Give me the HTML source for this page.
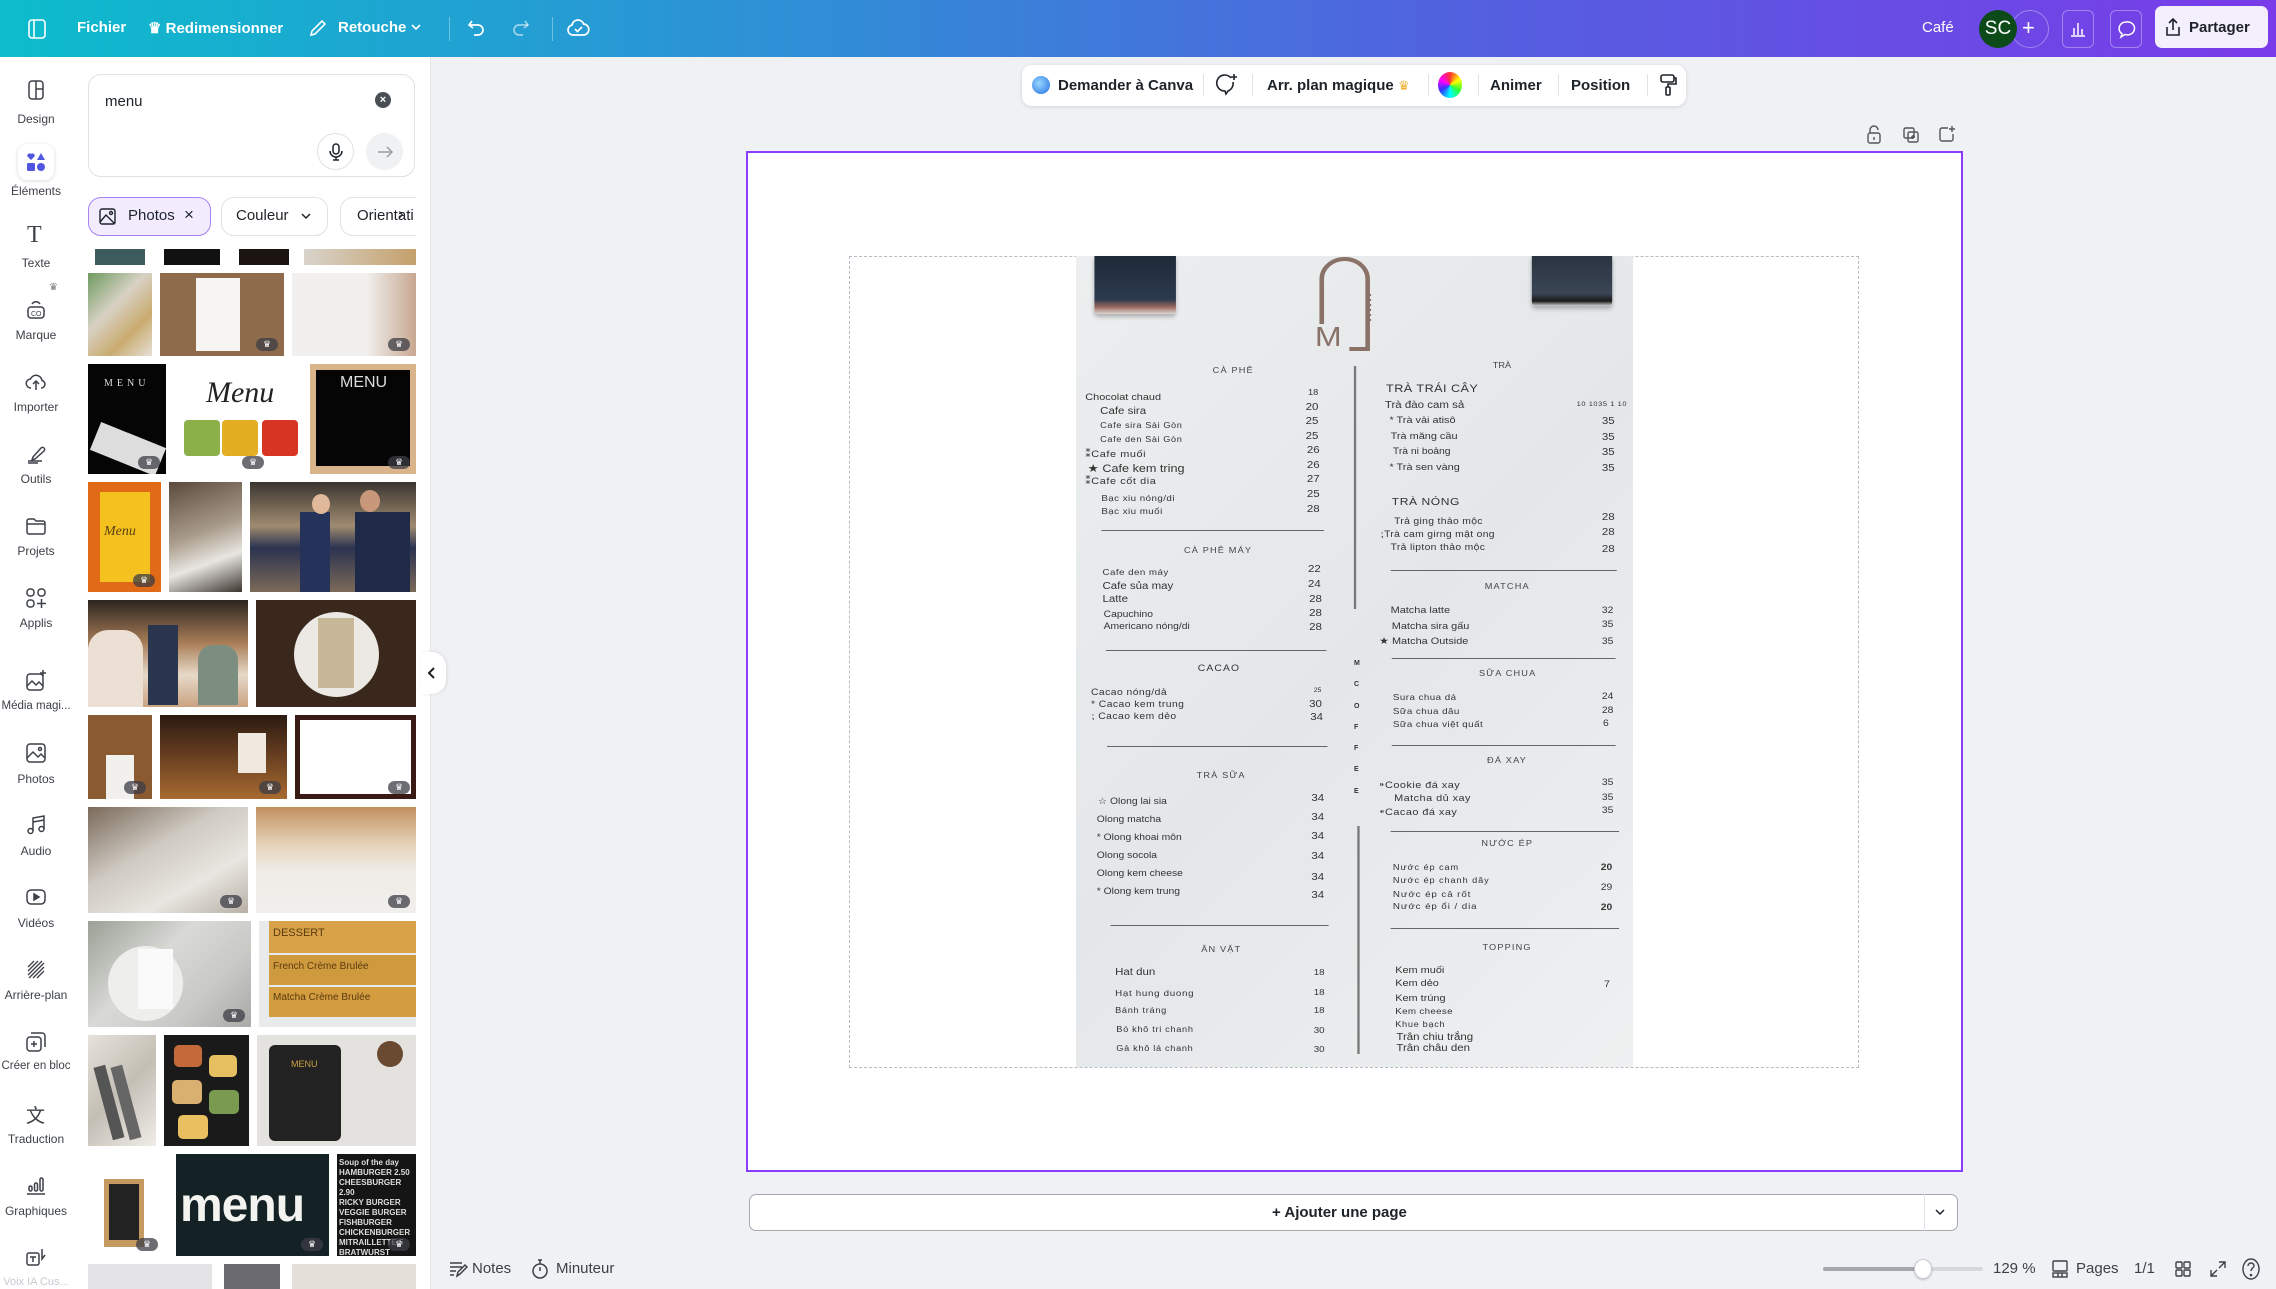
<!DOCTYPE html>
<html><head><meta charset="utf-8">
<style>
*{box-sizing:border-box;margin:0;padding:0}
body{width:2276px;height:1289px;overflow:hidden;background:#eff1f5;font-family:"Liberation Sans","Noto Sans CJK SC",sans-serif;position:relative;color:#0d1216}
.a{position:absolute}
#top{left:0;top:0;width:2276px;height:57px;background:linear-gradient(90deg,#0cbccc 0%,#2f8fd6 35%,#5360df 65%,#7a3be9 100%)}
.tt{color:#fff;font-size:15px;font-weight:bold;top:19px}
.rail{left:0;top:57px;width:72px;height:1232px;background:#fff}
.panel{left:72px;top:57px;width:359px;height:1232px;background:#fff;border-right:1px solid #e4e6ea}
.lbl{width:72px;left:0;text-align:center;font-size:12px;color:#3c4148}
.ic{left:24px;width:24px;height:24px}
.th{position:absolute;overflow:hidden}
.cr{position:absolute;right:6px;bottom:5px;width:22px;height:13px;border-radius:7px;background:rgba(60,60,70,.75);color:#fff;font-size:9px;text-align:center;line-height:13px}
.m{position:absolute;font-family:"Liberation Sans",sans-serif;color:#333;white-space:nowrap;font-size:10px;line-height:1}
.h{font-size:8px;letter-spacing:1px;color:#444}
.p{position:absolute;color:#333;font-size:10px;line-height:1}
.ln{position:absolute;height:1px;background:#666}
.tb{font-size:15px;font-weight:bold;color:#1d2329;top:77px}
.sep{position:absolute;top:74px;width:1px;height:22px;background:#e0e2e6}
#mw{position:absolute;left:0;top:0;width:2276px;height:1289px;transform-origin:1060px 0;transform:scaleX(1.148)}
</style></head><body>

<!-- TOP BAR -->
<div id="top" class="a"></div>
<svg class="a" style="left:26px;top:18px" width="22" height="22" viewBox="0 0 22 22" fill="none" stroke="#fff" stroke-width="1.6"><rect x="3" y="2" width="16" height="18" rx="3"/><line x1="8" y1="2" x2="8" y2="20"/></svg>
<div class="a tt" style="left:77px">Fichier</div>
<div class="a tt" style="left:148px">♛ Redimensionner</div>
<svg class="a" style="left:308px;top:18px" width="20" height="20" viewBox="0 0 20 20" fill="none" stroke="#fff" stroke-width="1.6"><path d="M3 17l1-4L14 3l3 3L7 16z"/></svg>
<div class="a tt" style="left:338px">Retouche</div>
<svg class="a" style="left:410px;top:22px" width="12" height="10" viewBox="0 0 12 10" fill="none" stroke="#fff" stroke-width="1.6"><path d="M2 3l4 4 4-4"/></svg>
<div class="a" style="left:449px;top:17px;width:1px;height:24px;background:rgba(255,255,255,.35)"></div>
<svg class="a" style="left:466px;top:17px" width="22" height="22" viewBox="0 0 22 22" fill="none" stroke="#fff" stroke-width="1.7"><path d="M6 4L3 8l4 3"/><path d="M3 8h9a5 5 0 010 10H8"/></svg>
<svg class="a" style="left:509px;top:17px" width="22" height="22" viewBox="0 0 22 22" fill="none" stroke="rgba(255,255,255,.55)" stroke-width="1.7"><path d="M16 4l3 4-4 3"/><path d="M19 8h-9a5 5 0 000 10h4"/></svg>
<div class="a" style="left:552px;top:17px;width:1px;height:24px;background:rgba(255,255,255,.35)"></div>
<svg class="a" style="left:566px;top:16px" width="24" height="24" viewBox="0 0 24 24" fill="none" stroke="#fff" stroke-width="1.7"><path d="M7 19a5 5 0 01-1-9.9A6 6 0 0117.6 8 5 5 0 0117 19z"/><path d="M9 13l2.5 2.5L16 11"/></svg>
<div class="a tt" style="left:1922px;font-weight:normal">Café</div>
<div class="a" style="left:2011px;top:10px;width:38px;height:38px;border-radius:50%;border:1px solid rgba(255,255,255,.35)"></div>
<div class="a" style="left:2022px;top:15px;color:#fff;font-size:22px">+</div>
<div class="a" style="left:1979px;top:10px;width:38px;height:38px;border-radius:50%;background:#0c4a1a;color:#fff;font-size:19px;text-align:center;line-height:38px">SC</div>
<div class="a" style="left:2062px;top:10px;width:32px;height:38px;border-radius:6px;border:1px solid rgba(255,255,255,.35)"></div>
<svg class="a" style="left:2068px;top:19px" width="20" height="20" viewBox="0 0 20 20" fill="none" stroke="#fff" stroke-width="1.5"><path d="M3 17h14M6 16V9M10 16V4M14 16v-6"/></svg>
<div class="a" style="left:2110px;top:10px;width:32px;height:38px;border-radius:6px;border:1px solid rgba(255,255,255,.35)"></div>
<svg class="a" style="left:2116px;top:19px" width="20" height="20" viewBox="0 0 20 20" fill="none" stroke="#fff" stroke-width="1.5"><path d="M10 3a7 6.5 0 00-4 11.8L5 18l4-2.6A7 6.5 0 1010 3z"/></svg>
<div class="a" style="left:2155px;top:6px;width:113px;height:42px;border-radius:7px;background:#f4effd"></div>
<svg class="a" style="left:2163px;top:17px" width="20" height="20" viewBox="0 0 20 20" fill="none" stroke="#1d2329" stroke-width="1.6"><path d="M10 13V2M6 6l4-4 4 4M4 10v8h12v-8"/></svg>
<div class="a" style="left:2189px;top:19px;font-size:15px;font-weight:bold;color:#1d2329">Partager</div>

<!-- LEFT RAIL -->
<div class="a rail"></div>
<div class="a panel"></div>
<svg class="a ic" style="top:78px" viewBox="0 0 24 24" fill="none" stroke="#3c4148" stroke-width="1.5"><rect x="5" y="3" width="14" height="18" rx="3"/><path d="M12 3v18M12 11h7"/></svg>
<div class="a lbl" style="top:112px">Design</div>
<div class="a" style="left:18px;top:144px;width:36px;height:36px;border-radius:9px;background:#fff;box-shadow:0 1px 4px rgba(0,0,0,.15)"></div>
<svg class="a" style="left:26px;top:152px" width="20" height="20" viewBox="0 0 20 20" fill="#4f57e0"><path d="M5 8L1.5 4.5a2.2 2.2 0 013.5-2.5 2.2 2.2 0 013.5 2.5z"/><path d="M15 1l4 7h-8z"/><rect x="1" y="11" width="8" height="8" rx="1.5"/><circle cx="15" cy="15" r="4"/></svg>
<div class="a lbl" style="top:184px">Éléments</div>
<div class="a" style="left:27px;top:222px;font-size:24px;color:#3c4148;font-family:'Liberation Serif',serif">T</div>
<div class="a lbl" style="top:256px">Texte</div>
<div class="a" style="left:49px;top:282px;font-size:10px;color:#777">♛</div>
<svg class="a ic" style="top:298px" viewBox="0 0 24 24" fill="none" stroke="#3c4148" stroke-width="1.5"><rect x="4" y="9" width="16" height="11" rx="3"/><path d="M8 6c2-3 6-3 8 0"/><text x="7" y="18" font-size="7" fill="#3c4148" stroke="none" font-family="Liberation Sans">CO</text></svg>
<div class="a lbl" style="top:328px">Marque</div>
<svg class="a ic" style="top:370px" viewBox="0 0 24 24" fill="none" stroke="#3c4148" stroke-width="1.5"><path d="M7 18a4.5 4.5 0 01-.5-9 6 6 0 0111.5 1.5A3.8 3.8 0 0117 18"/><path d="M12 20v-8M9 14l3-3 3 3"/></svg>
<div class="a lbl" style="top:400px">Importer</div>
<svg class="a ic" style="top:442px" viewBox="0 0 24 24" fill="none" stroke="#3c4148" stroke-width="1.5"><path d="M9 15l8-9a2 2 0 013 3l-9 8-3 1z"/><path d="M4 19h14M4 21h10"/></svg>
<div class="a lbl" style="top:472px">Outils</div>
<svg class="a ic" style="top:514px" viewBox="0 0 24 24" fill="none" stroke="#3c4148" stroke-width="1.5"><path d="M3 7a2 2 0 012-2h5l2 2h7a2 2 0 012 2v9a2 2 0 01-2 2H5a2 2 0 01-2-2z"/><path d="M3 10h18"/></svg>
<div class="a lbl" style="top:544px">Projets</div>
<svg class="a ic" style="top:586px" viewBox="0 0 24 24" fill="none" stroke="#3c4148" stroke-width="1.5"><rect x="3" y="3" width="7" height="7" rx="3"/><rect x="14" y="3" width="7" height="7" rx="3"/><rect x="3" y="14" width="7" height="7" rx="3"/><path d="M17.5 13v9M13 17.5h9"/></svg>
<div class="a lbl" style="top:616px">Applis</div>
<svg class="a ic" style="top:669px" viewBox="0 0 24 24" fill="none" stroke="#3c4148" stroke-width="1.5"><rect x="3" y="5" width="16" height="16" rx="3"/><path d="M3 17l5-5 4 4 3-3 4 4"/><path d="M19 1v6M16 4h6"/></svg>
<div class="a lbl" style="top:700px;font-size:11.5px">Média magi...</div>
<svg class="a ic" style="top:741px" viewBox="0 0 24 24" fill="none" stroke="#3c4148" stroke-width="1.5"><rect x="3" y="3" width="18" height="18" rx="3"/><path d="M3 17l6-6 5 5 3-3 4 4"/><circle cx="16" cy="8" r="1.5"/></svg>
<div class="a lbl" style="top:772px">Photos</div>
<svg class="a ic" style="top:813px" viewBox="0 0 24 24" fill="none" stroke="#3c4148" stroke-width="1.5"><path d="M9 18V5l11-2v13"/><circle cx="6.5" cy="18" r="2.5"/><circle cx="17.5" cy="16" r="2.5"/><path d="M9 9l11-2"/></svg>
<div class="a lbl" style="top:844px">Audio</div>
<svg class="a ic" style="top:885px" viewBox="0 0 24 24" fill="none" stroke="#3c4148" stroke-width="1.5"><rect x="3" y="5" width="18" height="14" rx="4"/><path d="M10 9v6l5-3z" fill="#3c4148"/></svg>
<div class="a lbl" style="top:916px">Vidéos</div>
<svg class="a ic" style="top:957px" viewBox="0 0 24 24" fill="none" stroke="#3c4148" stroke-width="1.3"><path d="M4 10l6-6M4 14l10-10M4 18l14-14M5 21l15-15M9 21l11-11M13 21l7-7"/></svg>
<div class="a lbl" style="top:988px">Arrière-plan</div>
<svg class="a ic" style="top:1030px" viewBox="0 0 24 24" fill="none" stroke="#3c4148" stroke-width="1.5"><rect x="3" y="7" width="14" height="14" rx="3"/><path d="M7 3h11a3 3 0 013 3v11"/><path d="M10 11v6M7 14h6"/></svg>
<div class="a lbl" style="top:1060px;font-size:11.5px">Créer en bloc</div>
<div class="a" style="left:26px;top:1101px;font-size:19px;color:#3c4148;font-family:'Noto Sans CJK SC',sans-serif">文</div>
<div class="a lbl" style="top:1132px">Traduction</div>
<svg class="a ic" style="top:1173px" viewBox="0 0 24 24" fill="none" stroke="#3c4148" stroke-width="1.5"><path d="M3 21h18"/><rect x="5" y="13" width="3" height="5" rx="1.5"/><rect x="10.5" y="10" width="3" height="8" rx="1.5"/><rect x="16" y="5" width="3" height="13" rx="1.5"/></svg>
<div class="a lbl" style="top:1204px">Graphiques</div>
<svg class="a ic" style="top:1244px" viewBox="0 0 24 24" fill="none" stroke="#3c4148" stroke-width="1.5"><rect x="3" y="9" width="12" height="12" rx="2"/><path d="M6 13h6M9 13v5M18 5v10l3-4"/></svg>
<div class="a lbl" style="top:1276px;color:#c8cad0;font-size:11px">Voix IA Cus...</div>

<!-- SEARCH -->
<div class="a" style="left:88px;top:74px;width:327px;height:103px;border:1px solid #dfe1e5;border-radius:13px;background:#fff"></div>
<div class="a" style="left:105px;top:93px;font-size:15px;color:#1d2329">menu</div>
<div class="a" style="left:375px;top:92px;width:16px;height:16px;border-radius:50%;background:#4a4f55;color:#fff;font-size:11px;line-height:16px;text-align:center;font-weight:bold">×</div>
<div class="a" style="left:317px;top:133px;width:37px;height:37px;border-radius:50%;border:1px solid #dfe1e5"></div>
<svg class="a" style="left:326px;top:142px" width="20" height="20" viewBox="0 0 20 20" fill="none" stroke="#1d2329" stroke-width="1.5"><rect x="7" y="2" width="6" height="10" rx="3"/><path d="M4 9a6 6 0 0012 0M10 15v3M7 18h6"/></svg>
<div class="a" style="left:366px;top:133px;width:37px;height:37px;border-radius:50%;background:#f0f1f3"></div>
<svg class="a" style="left:375px;top:142px" width="20" height="20" viewBox="0 0 20 20" fill="none" stroke="#9a9ea5" stroke-width="1.5"><path d="M3 10h14M12 5l5 5-5 5"/></svg>
<!-- chips -->
<div class="a" style="left:88px;top:197px;width:123px;height:39px;border:1.5px solid #a782f2;border-radius:13px;background:#f2ecfe"></div>
<svg class="a" style="left:98px;top:207px" width="19" height="19" viewBox="0 0 19 19" fill="none" stroke="#1d2329" stroke-width="1.4"><rect x="2" y="2" width="15" height="15" rx="2"/><path d="M2 15l6-7 9 9"/><circle cx="13" cy="6" r="1.5"/></svg>
<div class="a" style="left:128px;top:207px;font-size:15px;color:#1d2329">Photos</div>
<div class="a" style="left:184px;top:205px;font-size:17px;color:#1d2329">×</div>
<div class="a" style="left:221px;top:197px;width:107px;height:39px;border:1px solid #dfe1e5;border-radius:13px"></div>
<div class="a" style="left:236px;top:207px;font-size:15px;color:#1d2329">Couleur</div>
<svg class="a" style="left:300px;top:211px" width="12" height="10" viewBox="0 0 12 10" fill="none" stroke="#1d2329" stroke-width="1.5"><path d="M2 3l4 4 4-4"/></svg>
<div class="a" style="left:340px;top:197px;width:76px;height:39px;border:1px solid #dfe1e5;border-radius:13px 0 0 13px;border-right:none;overflow:hidden"><div style="position:absolute;left:16px;top:9px;font-size:15px;color:#1d2329">Orientati</div></div>
<div class="a" style="left:398px;top:204px;font-size:17px;color:#1d2329">›</div>

<!-- THUMBNAILS -->
<div class="th" style="left:95px;top:249px;width:50px;height:16px;background:#3d5a5c"></div>
<div class="th" style="left:164px;top:249px;width:56px;height:16px;background:#111"></div>
<div class="th" style="left:239px;top:249px;width:50px;height:16px;background:#1c1410"></div>
<div class="th" style="left:304px;top:249px;width:112px;height:16px;background:linear-gradient(90deg,#d9d4cc,#c4a06a)"></div>

<div class="th" style="left:88px;top:273px;width:64px;height:83px;background:linear-gradient(135deg,#6f9a60,#d8d2c4 40%,#c9ab70 70%,#e6e0d6)"></div>
<div class="th" style="left:160px;top:273px;width:124px;height:83px;background:#8e6c4b"><div class="a" style="left:36px;top:5px;width:44px;height:73px;background:#f7f5f2"></div><div class="cr">♛</div></div>
<div class="th" style="left:292px;top:273px;width:124px;height:83px;background:linear-gradient(90deg,#f1f0ee 60%,#c7a790)"><div class="cr">♛</div></div>

<div class="th" style="left:88px;top:364px;width:78px;height:110px;background:#050505"><div class="a" style="left:16px;top:14px;color:#ddd;font-size:10px;letter-spacing:4px;font-family:'Liberation Serif',serif">MENU</div><div class="a" style="left:5px;top:70px;width:70px;height:30px;background:#ddd;transform:rotate(22deg)"></div><div class="cr">♛</div></div>
<div class="th" style="left:176px;top:364px;width:124px;height:110px;background:#fff"><div class="a" style="left:30px;top:12px;font-size:30px;font-style:italic;font-family:'Liberation Serif',serif;color:#222">Menu</div><div class="a" style="left:8px;top:56px;width:36px;height:36px;background:#8bb04a;border-radius:4px"></div><div class="a" style="left:46px;top:56px;width:36px;height:36px;background:#e3ae22;border-radius:4px"></div><div class="a" style="left:86px;top:56px;width:36px;height:36px;background:#d83424;border-radius:4px"></div><div class="cr" style="right:36px">♛</div></div>
<div class="th" style="left:310px;top:364px;width:106px;height:110px;background:#d9b48a"><div class="a" style="left:6px;top:6px;width:94px;height:96px;background:#050505"></div><div class="a" style="left:30px;top:10px;color:#ddd;font-size:16px">MENU</div><div class="cr">♛</div></div>

<div class="th" style="left:88px;top:482px;width:73px;height:110px;background:#e06a16"><div class="a" style="left:12px;top:10px;width:50px;height:90px;background:#f4c11f"></div><div class="a" style="left:16px;top:42px;font-size:14px;font-style:italic;font-family:'Liberation Serif',serif;color:#5a4010">Menu</div><div class="cr">♛</div></div>
<div class="th" style="left:169px;top:482px;width:73px;height:110px;background:linear-gradient(160deg,#5a4a3c,#a89a88 45%,#e8e6e2 70%,#3d3630)"></div>
<div class="th" style="left:250px;top:482px;width:166px;height:110px;background:linear-gradient(180deg,#3a3530 0%,#a08b70 40%,#2b3350 60%,#7c6a58 100%)"><div class="a" style="left:50px;top:30px;width:30px;height:80px;background:#25335a"></div><div class="a" style="left:105px;top:30px;width:55px;height:80px;background:#1e2a48"></div><div class="a" style="left:62px;top:12px;width:18px;height:20px;border-radius:50%;background:#e0b89a"></div><div class="a" style="left:110px;top:8px;width:20px;height:22px;border-radius:50%;background:#c9987a"></div></div>

<div class="th" style="left:88px;top:600px;width:160px;height:107px;background:linear-gradient(180deg,#2b2420 0%,#a87d56 40%,#e6d9c8 70%,#caa382)"><div class="a" style="left:0;top:30px;width:55px;height:77px;background:#ecdfd3;border-radius:20px 20px 0 0"></div><div class="a" style="left:60px;top:25px;width:30px;height:80px;background:#2a3550"></div><div class="a" style="left:110px;top:45px;width:40px;height:60px;background:#7b8e80;border-radius:15px 15px 0 0"></div></div>
<div class="th" style="left:256px;top:600px;width:160px;height:107px;background:#3a281c"><div class="a" style="left:38px;top:12px;width:85px;height:85px;border-radius:50%;background:#ece9e4"></div><div class="a" style="left:62px;top:18px;width:36px;height:70px;background:#c8b89a"></div></div>

<div class="th" style="left:88px;top:715px;width:64px;height:84px;background:#8a5a30"><div class="a" style="left:18px;top:40px;width:28px;height:44px;background:#f2f0ec"></div><div class="cr">♛</div></div>
<div class="th" style="left:160px;top:715px;width:127px;height:84px;background:linear-gradient(180deg,#2a1a10,#6a4020 50%,#a86a30)"><div class="a" style="left:78px;top:18px;width:28px;height:40px;background:#efe9e0"></div><div class="cr">♛</div></div>
<div class="th" style="left:295px;top:715px;width:121px;height:84px;background:#3a1a14"><div class="a" style="left:5px;top:5px;width:111px;height:74px;background:#fff"></div><div class="cr">♛</div></div>

<div class="th" style="left:88px;top:807px;width:160px;height:106px;background:linear-gradient(150deg,#7a6a5a,#cfcac2 40%,#e8e6e0 70%,#b7b0a6)"><div class="cr">♛</div></div>
<div class="th" style="left:256px;top:807px;width:160px;height:106px;background:linear-gradient(180deg,#c39060 0%,#e4d2b8 35%,#efece6 60%,#f1efec)"><div class="cr">♛</div></div>

<div class="th" style="left:88px;top:921px;width:163px;height:106px;background:linear-gradient(135deg,#9aa095,#d9d9d6 40%,#c9c9c6 70%,#a9a9a6)"><div class="a" style="left:20px;top:25px;width:75px;height:75px;border-radius:50%;background:#eeeeec"></div><div class="a" style="left:50px;top:28px;width:35px;height:60px;background:#fafafa"></div><div class="cr">♛</div></div>
<div class="th" style="left:259px;top:921px;width:157px;height:106px;background:#e8eaec"><div class="a" style="left:10px;top:0;width:147px;height:32px;background:#d9a248"></div><div class="a" style="left:10px;top:34px;width:147px;height:30px;background:#cf9a3e"></div><div class="a" style="left:10px;top:66px;width:147px;height:30px;background:#d39c3e"></div><div class="a" style="left:14px;top:6px;font-size:11px;color:#5a3a10">DESSERT</div><div class="a" style="left:14px;top:40px;font-size:10px;color:#5a3a10">French Crème Brulée</div><div class="a" style="left:14px;top:71px;font-size:10px;color:#5a3a10">Matcha Crème Brulée</div></div>

<div class="th" style="left:88px;top:1035px;width:68px;height:111px;background:linear-gradient(135deg,#e6e2da,#c4bfb5 50%,#f0ede8)"><div class="a" style="left:15px;top:30px;width:12px;height:75px;background:#555;transform:rotate(-15deg)"></div><div class="a" style="left:32px;top:30px;width:12px;height:75px;background:#666;transform:rotate(-15deg)"></div></div>
<div class="th" style="left:164px;top:1035px;width:85px;height:111px;background:#1a1a1a"><div class="a" style="left:10px;top:10px;width:28px;height:22px;border-radius:5px;background:#c46a3a"></div><div class="a" style="left:45px;top:20px;width:28px;height:22px;border-radius:5px;background:#e6c060"></div><div class="a" style="left:8px;top:45px;width:30px;height:24px;border-radius:5px;background:#d9b070"></div><div class="a" style="left:45px;top:55px;width:30px;height:24px;border-radius:5px;background:#7a9a50"></div><div class="a" style="left:14px;top:80px;width:30px;height:24px;border-radius:5px;background:#e8c060"></div></div>
<div class="th" style="left:257px;top:1035px;width:159px;height:111px;background:#e4e2de"><div class="a" style="left:12px;top:10px;width:72px;height:96px;border-radius:6px;background:#222"></div><div class="a" style="left:34px;top:24px;color:#c9a040;font-size:9px">MENU</div><div class="a" style="left:120px;top:6px;width:26px;height:26px;border-radius:50%;background:#6a4a30"></div></div>

<div class="th" style="left:88px;top:1154px;width:76px;height:102px;background:#fff"><div class="a" style="left:16px;top:25px;width:40px;height:68px;background:#c49a60"></div><div class="a" style="left:21px;top:30px;width:30px;height:56px;background:#222"></div><div class="cr">♛</div></div>
<div class="th" style="left:176px;top:1154px;width:153px;height:102px;background:#142225"><div class="a" style="left:4px;top:24px;font-size:48px;font-weight:bold;color:#f3f3f0;letter-spacing:-1px">menu</div><div class="cr">♛</div></div>
<div class="th" style="left:337px;top:1154px;width:79px;height:102px;background:#151515"><div class="a" style="left:2px;top:4px;font-size:8px;line-height:10px;color:#ddd;font-weight:bold">Soup of the day<br>HAMBURGER 2.50<br>CHEESBURGER 2.90<br>RICKY BURGER<br>VEGGIE BURGER<br>FISHBURGER<br>CHICKENBURGER<br>MITRAILLETTE 5<br>BRATWURST</div><div class="cr">♛</div></div>

<div class="th" style="left:88px;top:1264px;width:124px;height:25px;background:#e4e4e6"></div>
<div class="th" style="left:224px;top:1264px;width:56px;height:25px;background:#6a6a70"></div>
<div class="th" style="left:292px;top:1264px;width:124px;height:25px;background:#e6e0da"></div>

<!-- collapse tab -->
<div class="a" style="left:420px;top:652px;width:26px;height:42px;border-radius:0 14px 14px 0;background:#fff;box-shadow:1px 0 3px rgba(0,0,0,.1)"></div>
<svg class="a" style="left:424px;top:665px" width="16" height="16" viewBox="0 0 16 16" fill="none" stroke="#1d2329" stroke-width="2"><path d="M10 3L5 8l5 5"/></svg>

<!-- CANVAS TOOLBAR -->
<div class="a" style="left:1022px;top:65px;width:664px;height:41px;background:#fff;border-radius:10px;box-shadow:0 1px 4px rgba(0,0,0,.12)"></div>
<div class="a" style="left:1032px;top:76px;width:18px;height:18px;border-radius:50%;background:radial-gradient(circle at 40% 40%,#9ad6ff,#1f6fe0)"></div>
<div class="a tb" style="left:1058px">Demander à Canva</div>
<div class="sep" style="left:1203px"></div>
<svg class="a" style="left:1215px;top:73px" width="24" height="24" viewBox="0 0 24 24" fill="none" stroke="#1d2329" stroke-width="1.6"><path d="M16 5a8 8 0 10-6 13l1 3 2-3a8 8 0 005-9"/><path d="M19 1v6M16 4h6"/></svg>
<div class="sep" style="left:1252px"></div>
<div class="a tb" style="left:1267px">Arr. plan magique</div>
<div class="a" style="left:1398px;top:78px;font-size:13px;color:#f0b030">♛</div>
<div class="sep" style="left:1428px"></div>
<div class="a" style="left:1438px;top:72px;width:24px;height:26px;border-radius:50%;background:conic-gradient(#f33,#ff0,#3f3,#0ff,#33f,#f0f,#f33)"></div>
<div class="sep" style="left:1478px"></div>
<div class="a tb" style="left:1490px">Animer</div>
<div class="sep" style="left:1558px"></div>
<div class="a tb" style="left:1571px">Position</div>
<div class="sep" style="left:1647px"></div>
<svg class="a" style="left:1658px;top:73px" width="20" height="24" viewBox="0 0 20 24" fill="none" stroke="#1d2329" stroke-width="1.6"><rect x="3" y="2" width="13" height="7" rx="2"/><path d="M16 5h2v6h-8v3"/><rect x="8" y="14" width="4" height="8" rx="1"/></svg>

<!-- page icons -->
<svg class="a" style="left:1866px;top:125px" width="16" height="20" viewBox="0 0 16 20" fill="none" stroke="#555" stroke-width="1.4"><path d="M4 8V5a4 4 0 018 0"/><rect x="2" y="8" width="12" height="10" rx="2"/><path d="M8 12v3"/></svg>
<svg class="a" style="left:1902px;top:126px" width="18" height="18" viewBox="0 0 18 18" fill="none" stroke="#555" stroke-width="1.4"><rect x="2" y="2" width="10" height="10" rx="1.5"/><rect x="6" y="6" width="10" height="10" rx="1.5"/><path d="M11 9v4M9 11h4"/></svg>
<svg class="a" style="left:1938px;top:125px" width="18" height="18" viewBox="0 0 18 18" fill="none" stroke="#555" stroke-width="1.4"><path d="M10 3H4a2 2 0 00-2 2v9a2 2 0 002 2h9a2 2 0 002-2V9"/><path d="M14 1v6M11 4h6"/></svg>

<!-- PAGE -->
<div class="a" style="left:746px;top:151px;width:1217px;height:1021px;background:#fff;border:2.5px solid #8b3dff"></div>
<div class="a" style="left:849px;top:256px;width:1010px;height:812px;border:1px dashed #b8bcc4"></div>
<div class="a" style="left:1076px;top:256px;width:557px;height:811px;background:linear-gradient(135deg,#eceeef,#e4e7e9 50%,#eef0f1)"></div>

<div id="mw">
<div class="a" style="left:1090px;top:256px;width:71px;height:58px;background:linear-gradient(180deg,#1f2a38,#2c3a4e 75%,#9a6a60 88%,#dcd6d0);border-radius:0 0 4px 4px;box-shadow:0 3px 4px rgba(0,0,0,.25)"></div>
<div class="a" style="left:1471px;top:256px;width:70px;height:50px;background:linear-gradient(180deg,#2a3340,#3a4656 75%,#1a1a1a 90%,#d0d0d0);border-radius:0 0 4px 4px;box-shadow:0 3px 4px rgba(0,0,0,.25)"></div>
<svg class="a" style="left:1280px;top:254px" width="60" height="102" viewBox="0 0 60 102" fill="none" stroke="#8a7269" stroke-width="4"><path d="M8 70V25a20 20 0 0140 0v70H32"/><path d="M50 40v30" stroke-dasharray="2 3" stroke-width="2"/></svg>
<div class="a" style="left:1282px;top:323px;font-size:28px;color:#8a7269;line-height:1">M</div>

<div class="m h" style="left:1193px;top:367px">CÀ PHÊ</div>
<div class="m" style="left:1082px;top:393px;font-size:9.5px">Chocolat chaud</div>
<div class="m" style="left:1095px;top:407px">Cafe sira</div>
<div class="m" style="left:1095px;top:422px;font-size:8px;letter-spacing:.5px">Cafe sira Sài Gòn</div>
<div class="m" style="left:1095px;top:436px;font-size:8px;letter-spacing:.5px">Cafe den Sài Gòn</div>
<div class="m" style="left:1082px;top:450px;font-size:9.5px;letter-spacing:.5px">⁑Cafe muối</div>
<div class="m" style="left:1084px;top:464px;font-size:11px">★ Cafe kem tring</div>
<div class="m" style="left:1082px;top:477px;font-size:9.5px;letter-spacing:.5px">⁑Cafe cốt dia</div>
<div class="m" style="left:1096px;top:494px;font-size:8.5px;letter-spacing:.4px">Bạc xiu nóng/di</div>
<div class="m" style="left:1096px;top:507px;font-size:8.5px;letter-spacing:.4px">Bạc xiu muối</div>
<div class="p" style="left:1276px;top:389px;font-size:8px">18</div>
<div class="p" style="left:1274px;top:403px">20</div>
<div class="p" style="left:1274px;top:417px">25</div>
<div class="p" style="left:1274px;top:432px">25</div>
<div class="p" style="left:1275px;top:446px">26</div>
<div class="p" style="left:1275px;top:461px">26</div>
<div class="p" style="left:1275px;top:475px">27</div>
<div class="p" style="left:1275px;top:490px">25</div>
<div class="p" style="left:1275px;top:505px">28</div>
<div class="ln" style="left:1096px;top:530px;width:194px"></div>
<div class="m h" style="left:1168px;top:547px">CÀ PHÊ MÁY</div>
<div class="m" style="left:1097px;top:568px;font-size:8.5px;letter-spacing:.4px">Cafe den máy</div>
<div class="m" style="left:1097px;top:582px">Cafe sủa may</div>
<div class="m" style="left:1097px;top:595px">Latte</div>
<div class="m" style="left:1098px;top:610px;font-size:9px">Capuchino</div>
<div class="m" style="left:1098px;top:622px;font-size:9px">Americano nóng/di</div>
<div class="p" style="left:1276px;top:565px">22</div>
<div class="p" style="left:1276px;top:580px">24</div>
<div class="p" style="left:1277px;top:595px">28</div>
<div class="p" style="left:1277px;top:609px">28</div>
<div class="p" style="left:1277px;top:623px">28</div>
<div class="ln" style="left:1316px;top:366px;width:1.5px;height:243px;background:#777"></div>
<div class="ln" style="left:1100px;top:650px;width:192px"></div>
<div class="m" style="left:1180px;top:664px;font-size:9px;letter-spacing:1px">CACAO</div>
<div class="m" style="left:1087px;top:688px;font-size:9px;letter-spacing:.4px">Cacao nóng/dả</div>
<div class="m" style="left:1087px;top:700px;font-size:9px;letter-spacing:.4px">* Cacao kem trung</div>
<div class="m" style="left:1087px;top:712px;font-size:9px;letter-spacing:.4px">⁏ Cacao kem dẻo</div>
<div class="p" style="left:1281px;top:688px;font-size:6px">25</div>
<div class="p" style="left:1277px;top:700px">30</div>
<div class="p" style="left:1278px;top:713px">34</div>
<div class="ln" style="left:1101px;top:746px;width:192px"></div>
<div class="m h" style="left:1179px;top:772px">TRÀ SỮA</div>
<div class="m" style="left:1093px;top:797px;font-size:9px">☆ Olong lai sia</div>
<div class="m" style="left:1092px;top:815px;font-size:9px">Olong matcha</div>
<div class="m" style="left:1092px;top:833px;font-size:9px">* Olong khoai môn</div>
<div class="m" style="left:1092px;top:851px;font-size:9px">Olong socola</div>
<div class="m" style="left:1092px;top:869px;font-size:9px">Olong kem cheese</div>
<div class="m" style="left:1092px;top:887px;font-size:9px">* Olong kem trung</div>
<div class="p" style="left:1279px;top:794px">34</div>
<div class="p" style="left:1279px;top:813px">34</div>
<div class="p" style="left:1279px;top:832px">34</div>
<div class="p" style="left:1279px;top:852px">34</div>
<div class="p" style="left:1279px;top:873px">34</div>
<div class="p" style="left:1279px;top:891px">34</div>
<div class="ln" style="left:1104px;top:925px;width:190px"></div>
<div class="m h" style="left:1183px;top:946px">ĂN VẶT</div>
<div class="m" style="left:1108px;top:968px;font-size:10px">Hat dun</div>
<div class="m" style="left:1108px;top:989px;font-size:8.5px;letter-spacing:.6px">Hạt hung duong</div>
<div class="m" style="left:1108px;top:1007px;font-size:8px;letter-spacing:.6px">Bánh tráng</div>
<div class="m" style="left:1109px;top:1026px;font-size:8px;letter-spacing:.6px">Bó khô tri chanh</div>
<div class="m" style="left:1109px;top:1045px;font-size:8px;letter-spacing:.6px">Gả khô lá chanh</div>
<div class="p" style="left:1281px;top:968px;font-size:8.5px">18</div>
<div class="p" style="left:1281px;top:988px;font-size:8.5px">18</div>
<div class="p" style="left:1281px;top:1006px;font-size:8.5px">18</div>
<div class="p" style="left:1281px;top:1026px;font-size:8.5px">30</div>
<div class="p" style="left:1281px;top:1045px;font-size:8.5px">30</div>
<div class="ln" style="left:1319px;top:826px;width:1.5px;height:228px;background:#777"></div>

<div class="m h" style="left:1437px;top:362px;letter-spacing:0">TRÀ</div>
<div class="m" style="left:1344px;top:384px;font-size:11px;letter-spacing:.4px">TRÀ TRÁI CÂY</div>
<div class="m" style="left:1343px;top:401px;font-size:10px">Trà đào cam sả</div>
<div class="m" style="left:1347px;top:416px;font-size:9.5px">* Trà vải atisô</div>
<div class="m" style="left:1348px;top:432px;font-size:9.5px">Trà măng cầu</div>
<div class="m" style="left:1350px;top:447px;font-size:9px">Trà ni boảng</div>
<div class="m" style="left:1347px;top:463px;font-size:9.5px">* Trà sen vàng</div>
<div class="p" style="left:1510px;top:402px;font-size:6.5px;letter-spacing:.5px">10 1035 1 10</div>
<div class="p" style="left:1532px;top:417px">35</div>
<div class="p" style="left:1532px;top:433px">35</div>
<div class="p" style="left:1532px;top:448px">35</div>
<div class="p" style="left:1532px;top:464px">35</div>
<div class="m" style="left:1349px;top:497px;font-size:10.5px;letter-spacing:.5px">TRÀ NÓNG</div>
<div class="m" style="left:1351px;top:517px;font-size:9px;letter-spacing:.3px">Trả ging thảo mộc</div>
<div class="m" style="left:1339px;top:530px;font-size:9px;letter-spacing:.3px">⁏Trà cam girng mật ong</div>
<div class="m" style="left:1348px;top:543px;font-size:9px;letter-spacing:.3px">Trả lipton thảo mộc</div>
<div class="p" style="left:1532px;top:513px">28</div>
<div class="p" style="left:1532px;top:528px">28</div>
<div class="p" style="left:1532px;top:545px">28</div>
<div class="ln" style="left:1348px;top:570px;width:197px"></div>
<div class="m h" style="left:1430px;top:583px">MATCHA</div>
<div class="m" style="left:1348px;top:606px;font-size:9.5px">Matcha latte</div>
<div class="m" style="left:1349px;top:622px;font-size:9.5px">Matcha sira gấu</div>
<div class="m" style="left:1338px;top:637px;font-size:9.5px">★ Matcha Outside</div>
<div class="p" style="left:1532px;top:606px;font-size:9px">32</div>
<div class="p" style="left:1532px;top:620px;font-size:9px">35</div>
<div class="p" style="left:1532px;top:637px;font-size:9px">35</div>
<div class="ln" style="left:1349px;top:658px;width:195px"></div>
<div class="m h" style="left:1425px;top:670px">SỮA CHUA</div>
<div class="m" style="left:1350px;top:693px;font-size:8.5px;letter-spacing:.4px">Sura chua dá</div>
<div class="m" style="left:1350px;top:707px;font-size:8.5px;letter-spacing:.4px">Sữa chua dâu</div>
<div class="m" style="left:1350px;top:720px;font-size:8.5px;letter-spacing:.4px">Sữa chua việt quất</div>
<div class="p" style="left:1532px;top:692px;font-size:9px">24</div>
<div class="p" style="left:1532px;top:706px;font-size:9px">28</div>
<div class="p" style="left:1533px;top:719px;font-size:9px">6</div>
<div class="ln" style="left:1349px;top:745px;width:195px"></div>
<div class="m h" style="left:1432px;top:757px">ĐÁ XAY</div>
<div class="m" style="left:1338px;top:781px;font-size:9.5px;letter-spacing:.4px">⁍Cookie đá xay</div>
<div class="m" style="left:1351px;top:794px;font-size:9.5px;letter-spacing:.4px">Matcha dủ xay</div>
<div class="m" style="left:1338px;top:808px;font-size:9.5px;letter-spacing:.4px">⁌Cacao đá xay</div>
<div class="p" style="left:1532px;top:778px;font-size:9px">35</div>
<div class="p" style="left:1532px;top:793px;font-size:9px">35</div>
<div class="p" style="left:1532px;top:806px;font-size:9px">35</div>
<div class="ln" style="left:1348px;top:831px;width:199px"></div>
<div class="m h" style="left:1427px;top:840px">NƯỚC ÉP</div>
<div class="m" style="left:1350px;top:864px;font-size:8px;letter-spacing:.8px">Nước ép cam</div>
<div class="m" style="left:1350px;top:877px;font-size:8px;letter-spacing:.8px">Nước ép chanh dây</div>
<div class="m" style="left:1350px;top:890px;font-size:8.5px;letter-spacing:.8px">Nước ép cả rốt</div>
<div class="m" style="left:1350px;top:902px;font-size:8.5px;letter-spacing:.8px">Nước ép ổi / dia</div>
<div class="p" style="left:1531px;top:863px;font-size:9px;font-weight:bold">20</div>
<div class="p" style="left:1531px;top:883px;font-size:9px">29</div>
<div class="p" style="left:1531px;top:903px;font-size:9px;font-weight:bold">20</div>
<div class="ln" style="left:1348px;top:928px;width:199px"></div>
<div class="m h" style="left:1428px;top:944px">TOPPING</div>
<div class="m" style="left:1352px;top:966px;font-size:9.5px">Kem muối</div>
<div class="m" style="left:1352px;top:979px;font-size:9.5px">Kem dẻo</div>
<div class="m" style="left:1352px;top:994px;font-size:9.5px">Kem trúng</div>
<div class="m" style="left:1352px;top:1007px;font-size:8.5px;letter-spacing:.3px">Kem cheese</div>
<div class="m" style="left:1352px;top:1021px;font-size:8px;letter-spacing:.6px">Khue bạch</div>
<div class="m" style="left:1353px;top:1033px;font-size:10px">Trân chiu trắng</div>
<div class="m" style="left:1353px;top:1044px;font-size:10px">Trân châu den</div>
<div class="p" style="left:1534px;top:980px;font-size:9px">7</div>
</div>
<div class="m" style="left:1354px;top:653px;font-size:7px;font-weight:bold;line-height:21.3px;white-space:normal;width:8px">M C O F F E E</div>

<!-- add page -->
<div class="a" style="left:749px;top:1194px;width:1209px;height:37px;border:1px solid #a6a9ae;border-radius:7px;background:#fff"></div>
<div class="a" style="left:1924px;top:1194px;width:1px;height:37px;background:#dfe1e5"></div>
<div class="a" style="left:1272px;top:1204px;font-size:15px;font-weight:bold;color:#1d2329">+ Ajouter une page</div>
<svg class="a" style="left:1934px;top:1207px" width="12" height="10" viewBox="0 0 12 10" fill="none" stroke="#1d2329" stroke-width="1.5"><path d="M2 3l4 4 4-4"/></svg>

<!-- bottom bar -->
<svg class="a" style="left:448px;top:1259px" width="20" height="20" viewBox="0 0 20 20" fill="none" stroke="#3c4148" stroke-width="1.5"><path d="M2 4h12M2 8h12M2 12h6M2 16h4M9 17l1-4 7-7 2 2-7 7z"/></svg>
<div class="a" style="left:472px;top:1260px;font-size:15px;color:#3c4148">Notes</div>
<svg class="a" style="left:530px;top:1258px" width="20" height="22" viewBox="0 0 20 22" fill="none" stroke="#3c4148" stroke-width="1.5"><circle cx="10" cy="13" r="7"/><path d="M10 9v4M8 2h4M10 2v4"/></svg>
<div class="a" style="left:556px;top:1260px;font-size:15px;color:#3c4148">Minuteur</div>
<div class="a" style="left:1823px;top:1267px;width:160px;height:4px;border-radius:2px;background:#d6d8dc"></div>
<div class="a" style="left:1823px;top:1267px;width:100px;height:4px;border-radius:2px;background:#a4a7ad"></div>
<div class="a" style="left:1914px;top:1259px;width:18px;height:20px;border-radius:50%;background:#fff;border:1px solid #c9ccd1;box-shadow:0 1px 2px rgba(0,0,0,.2)"></div>
<div class="a" style="left:1993px;top:1260px;font-size:15px;color:#3c4148">129 %</div>
<svg class="a" style="left:2050px;top:1259px" width="20" height="20" viewBox="0 0 20 20" fill="none" stroke="#3c4148" stroke-width="1.4"><rect x="3" y="2" width="14" height="10" rx="1"/><rect x="3" y="14" width="14" height="4"/><path d="M8 14v4M12 14v4"/></svg>
<div class="a" style="left:2076px;top:1260px;font-size:15px;color:#3c4148">Pages</div>
<div class="a" style="left:2134px;top:1260px;font-size:15px;color:#3c4148">1/1</div>
<svg class="a" style="left:2174px;top:1260px" width="18" height="18" viewBox="0 0 18 18" fill="none" stroke="#3c4148" stroke-width="1.4"><rect x="2" y="2" width="6" height="6" rx="1"/><rect x="10" y="2" width="6" height="6" rx="1"/><rect x="2" y="10" width="6" height="6" rx="1"/><rect x="10" y="10" width="6" height="6" rx="1"/></svg>
<svg class="a" style="left:2209px;top:1260px" width="18" height="18" viewBox="0 0 18 18" fill="none" stroke="#3c4148" stroke-width="1.4"><path d="M10 2h6v6M16 2l-6 6M8 16H2v-6M2 16l6-6"/></svg>
<svg class="a" style="left:2240px;top:1257px" width="22" height="24" viewBox="0 0 22 24" fill="none" stroke="#3c4148" stroke-width="1.4"><ellipse cx="11" cy="12" rx="8" ry="10"/><path d="M8 9a3 3 0 116 0c0 2-3 2-3 5"/><circle cx="11" cy="18" r=".6" fill="#3c4148"/></svg>
</body></html>
